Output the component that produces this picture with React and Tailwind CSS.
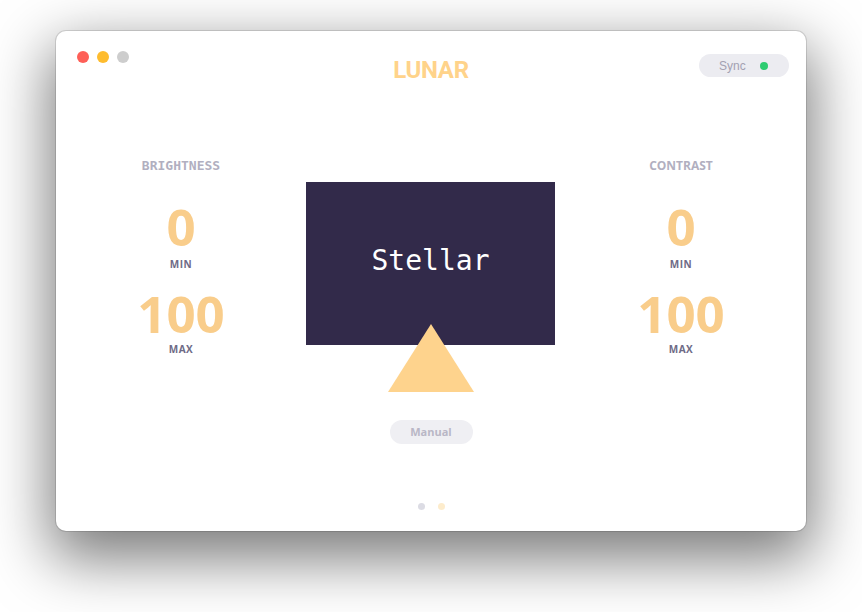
import React from "react"

// one column of limits: label, min value, max value
function LimitColumn({ label, mono }) {
    return <div className="flex flex-col items-center pt-[47px]">
        {mono
            ? <div className="text-[13px] leading-[16px] font-bold text-[#b1afc0] font-['DejaVu_Sans_Mono',monospace]">{label}</div>
            : <div className="text-[12px] leading-[16px] font-bold text-[#b1afc0] font-['Open_Sans',sans-serif]">{label}</div>}
        <div className="mt-[26px] text-[51px] leading-[52px] font-bold text-[#f9cd8b] font-['Open_Sans',sans-serif]">0</div>
        <div className="mt-[7px] text-[10px] leading-[10px] font-bold tracking-[0.5px] text-[#6e6b86] font-['Open_Sans',sans-serif]">MIN</div>
        <div className="mt-[18px] text-[51px] leading-[52px] font-bold text-[#f9cd8b] font-['Open_Sans',sans-serif]">100</div>
        <div className="mt-[5px] text-[10px] leading-[10px] font-bold tracking-[0.5px] text-[#6e6b86] font-['Open_Sans',sans-serif]">MAX</div>
    </div>
}

function App() {
    return <div className="min-h-[612px] bg-white pt-[31px] pl-[56px]">
        <div className="w-[750px] h-[500px] rounded-[10px] bg-white shadow-[0_22px_60px_6px_rgba(0,0,0,0.52),0_0_0_1px_rgba(0,0,0,0.12)] flex flex-col">
            {/* title bar */}
            <div className="grid grid-cols-[1fr_auto_1fr] h-[80px]">
                <div className="flex gap-[8px] pt-[20px] pl-[21px]">
                    <div className="w-[12px] h-[12px] rounded-full bg-[#fe5f57]"></div>
                    <div className="w-[12px] h-[12px] rounded-full bg-[#febc2e]"></div>
                    <div className="w-[12px] h-[12px] rounded-full bg-[#cdcdcd]"></div>
                </div>
                <div className="pt-[23px] text-[24px] leading-[32px] font-bold text-[#ffd38a] font-['Roboto',sans-serif] tracking-[-0.3px]">LUNAR</div>
                <div className="flex justify-end pt-[23px] pr-[17px]">
                    <div className="w-[90px] h-[23px] rounded-full bg-[#ececf1] flex items-center pl-[20px] gap-[14px]">
                        <span className="text-[12px] text-[#a3a1b1] font-['Liberation_Sans',sans-serif]">Sync</span>
                        <span className="w-[8px] h-[8px] rounded-full bg-[#2ecc71]"></span>
                    </div>
                </div>
            </div>
            {/* main area */}
            <div className="grid grid-cols-3">
                <LimitColumn label="BRIGHTNESS" mono />
                <div className="flex flex-col items-center pt-[71px]">
                    <div className="w-[249px] h-[163px] mr-[1px] bg-[#322a4a] flex items-center justify-center">
                        <span className="text-[28px] text-white font-['DejaVu_Sans_Mono',monospace] -mt-[6px]">Stellar</span>
                    </div>
                    <svg width="86" height="68" viewBox="0 0 86 68" className="-mt-[21px]">
                        <polygon points="43,0 86,68 0,68" fill="#fed38d" />
                    </svg>
                    <div className="mt-[28px] w-[83px] h-[24px] rounded-full bg-[#efeff3] flex items-center justify-center text-[11px] font-bold text-[#b9b7c6] font-['Open_Sans',sans-serif]">Manual</div>
                    <div className="mt-[59px] flex gap-[13px]">
                        <div className="w-[7px] h-[7px] rounded-full bg-[#dcdce4]"></div>
                        <div className="w-[7px] h-[7px] rounded-full bg-[#fdeccc]"></div>
                    </div>
                </div>
                <LimitColumn label="CONTRAST" />
            </div>
        </div>
    </div>
}
export default App
